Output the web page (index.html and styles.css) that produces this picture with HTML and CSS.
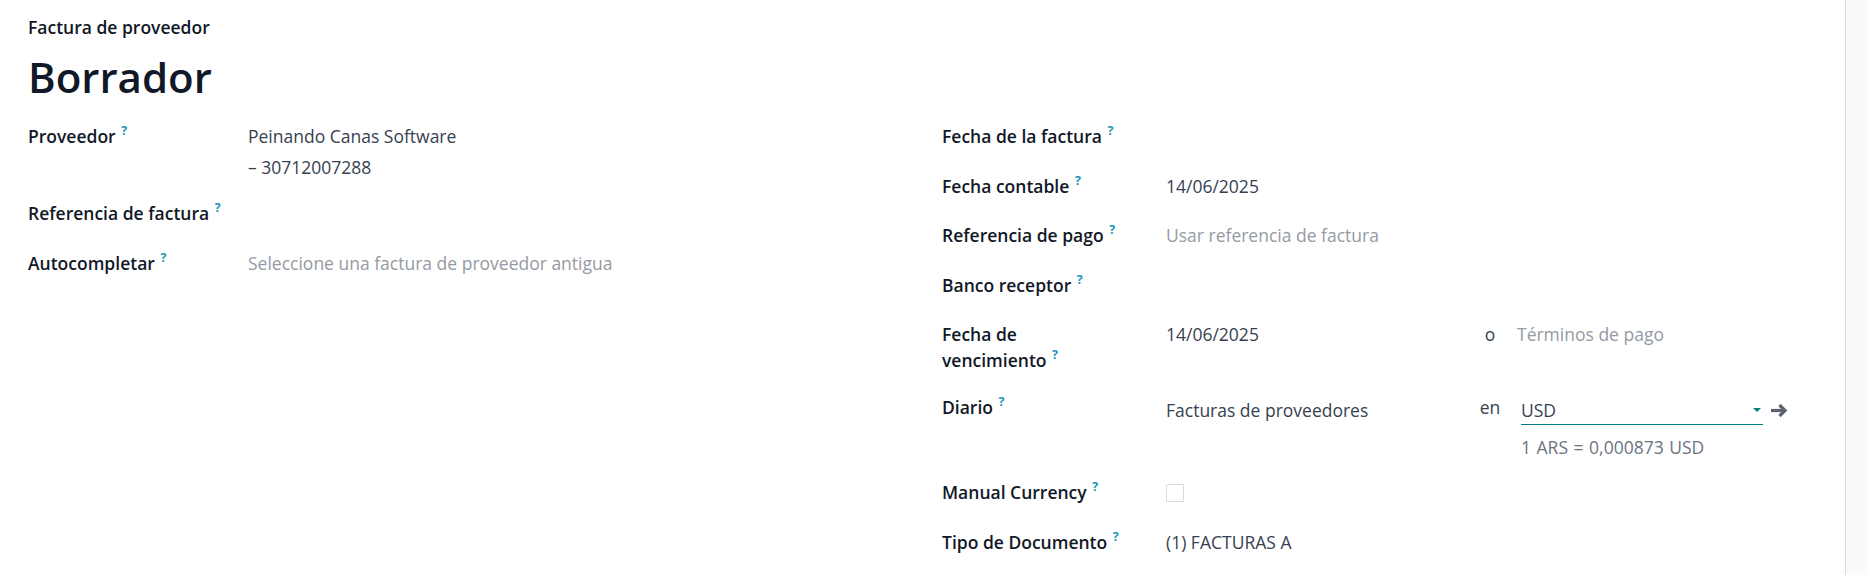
FILE: index.html
```html
<!DOCTYPE html>
<html lang="es">
<head>
    <meta charset="UTF-8">
    <meta name="viewport" content="width=device-width, initial-scale=1.0">
    <title>Factura de proveedor</title>
    <link rel="stylesheet" href="styles.css">
</head>
<body>
    <div class="page">
        <main class="sheet">
            <div class="title">
                <div class="kind">Factura de proveedor</div>
                <h1>Borrador</h1>
            </div>
            <div class="groups">
                <div class="group">
                    <div class="field field-partner">
                        <div class="label">Proveedor <sup class="tip">?</sup></div>
                        <div class="value">
                            <div>Peinando Canas Software</div>
                            <div class="vat">&ndash; 30712007288</div>
                        </div>
                    </div>
                    <div class="field">
                        <div class="label">Referencia de factura <sup class="tip">?</sup></div>
                        <div class="value"></div>
                    </div>
                    <div class="field">
                        <div class="label">Autocompletar <sup class="tip">?</sup></div>
                        <div class="value placeholder">Seleccione una factura de proveedor antigua</div>
                    </div>
                </div>

                <div class="group group-right">
                    <div class="field">
                        <div class="label">Fecha de la factura <sup class="tip">?</sup></div>
                        <div class="value"></div>
                    </div>
                    <div class="field">
                        <div class="label">Fecha contable <sup class="tip">?</sup></div>
                        <div class="value">14/06/2025</div>
                    </div>
                    <div class="field">
                        <div class="label">Referencia de pago <sup class="tip">?</sup></div>
                        <div class="value placeholder">Usar referencia de factura</div>
                    </div>
                    <div class="field">
                        <div class="label">Banco receptor <sup class="tip">?</sup></div>
                        <div class="value"></div>
                    </div>
                    <div class="field field-due">
                        <div class="label">Fecha de<br>vencimiento <sup class="tip">?</sup></div>
                        <div class="value pair">
                            <div class="pair-main">14/06/2025</div>
                            <div class="sep">o</div>
                            <div class="pair-side placeholder terms">Términos de pago</div>
                        </div>
                    </div>
                    <div class="field field-journal">
                        <div class="label">Diario <sup class="tip">?</sup></div>
                        <div class="value">
                            <div class="pair">
                                <div class="pair-main input">Facturas de proveedores</div>
                                <div class="sep">en</div>
                                <div class="currency input">
                                    <span>USD</span>
                                    <span class="caret"></span>
                                </div>
                                <svg class="open-link" width="18" height="15" viewBox="0 0 18 15">
                                    <path d="M1 7.5H15" stroke="currentColor" stroke-width="3.2" fill="none"/>
                                    <path d="M9.5 2l5.5 5.5-5.5 5.5" stroke="currentColor" stroke-width="3.2" fill="none"/>
                                </svg>
                            </div>
                            <div class="rate">1 ARS = 0,000873 USD</div>
                        </div>
                    </div>
                    <div class="field">
                        <div class="label">Manual Currency <sup class="tip">?</sup></div>
                        <div class="value"><span class="checkbox"></span></div>
                    </div>
                    <div class="field">
                        <div class="label">Tipo de Documento <sup class="tip">?</sup></div>
                        <div class="value">(1) FACTURAS A</div>
                    </div>
                </div>
            </div>
        </main>
        <aside class="chatter"></aside>
    </div>
</body>
</html>
```

FILE: styles.css
```css
html, body {
    margin: 0;
    height: 575px;
    overflow: hidden;
}
body {
    font-family: "Open Sans", "Noto Sans", sans-serif;
    font-size: 17.5px;
    line-height: 26px;
    color: #374151;
    background: #fff;
}
.page {
    display: flex;
    height: 575px;
}
.sheet {
    flex: 1;
    padding: 14px 28px 0 28px;
}
.chatter {
    width: 22px;
    border-left: 1px solid #d8dadd;
    background: #f9fafb;
}
.title .kind {
    font-weight: 600;
    color: #111827;
}
.title h1 {
    margin: 12px 0 0 0;
    font-size: 42px;
    line-height: 49px;
    font-weight: 600;
    color: #111827;
}
.groups {
    display: grid;
    grid-template-columns: 1fr 1fr;
    column-gap: 39px;
    margin-top: 22px;
}
.field {
    display: grid;
    grid-template-columns: 220px 1fr;
    margin-bottom: 23.5px;
}
.group-right .field {
    grid-template-columns: 224px 1fr;
}
.label {
    font-weight: 600;
    color: #111827;
}
.tip {
    font-size: 12.5px;
    font-weight: 700;
    color: #1a97b9;
    vertical-align: top;
    line-height: 16px;
    margin-left: 1px;
}
.placeholder {
    color: #959aa3;
}
.vat {
    margin-top: 5px;
}
.field-partner {
    margin-bottom: 20px;
}
.field-due {
    margin-bottom: 21px;
}
.field-journal {
    margin-bottom: 19px;
}
.pair {
    display: flex;
    align-items: flex-start;
}
.pair-main {
    width: 300px;
}
.sep {
    width: 48px;
    text-align: center;
}
.terms {
    padding-left: 3px;
}
.input {
    padding-top: 3px;
    padding-bottom: 1px;
}
.currency {
    margin-left: 7px;
    width: 242px;
    display: flex;
    justify-content: space-between;
    align-items: center;
    border-bottom: 1px solid #017e84;
}
.caret {
    width: 0;
    height: 0;
    margin-right: 2px;
    border-left: 4px solid transparent;
    border-right: 4px solid transparent;
    border-top: 4px solid #017e84;
}
.open-link {
    color: #5b616e;
    margin: 9px 0 0 7px;
}
.rate {
    margin: 9px 0 0 355px;
    color: #6c737f;
    word-spacing: 1px;
}
.checkbox {
    display: block;
    width: 16px;
    height: 16px;
    margin-top: 5px;
    border: 1px solid #d8dadd;
    border-radius: 1px;
}
```
